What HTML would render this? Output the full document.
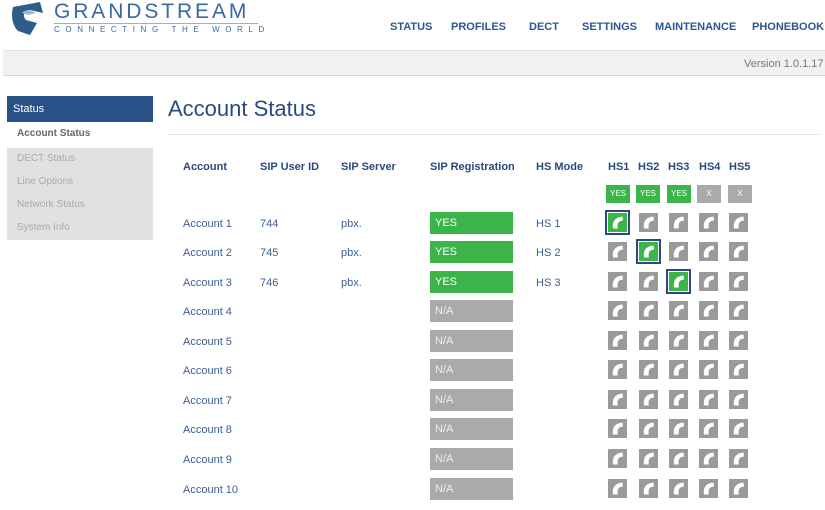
<!DOCTYPE html>
<html><head><meta charset="utf-8"><style>
*{margin:0;padding:0;box-sizing:border-box}
body{width:825px;height:510px;overflow:hidden;background:#fff;font-family:"Liberation Sans",sans-serif;position:relative;color:#2f5590}
.a{position:absolute;white-space:nowrap}
.nav{font-size:11px;font-weight:bold;color:#2f5590;top:20px}
.th{font-size:11px;font-weight:bold;color:#2a4a7d;top:161px}
.td{font-size:11px;color:#3a5e94}
.reg{position:absolute;left:430px;width:83px;height:22px;color:#fff;font-size:11px;line-height:22px;padding-left:5px}
.y{background:#3bb44a}.n{background:#aaaaaa;color:#eee}
.bd{position:absolute;top:185px;width:24px;height:18px;font-size:8px;color:#fff;text-align:center;line-height:18px}
.ph{position:absolute;width:19px;height:19px;background:#9a9a9a}
.ph svg{display:block}
.sel{position:absolute;width:25px;height:25px;border:2px solid #2a4a7d;background:#fff}
.sel .ph{left:1px;top:1px;background:#3bb44a}
</style></head><body>
<svg width="0" height="0" style="position:absolute"><defs><symbol id="h" viewBox="0 0 19 19"><path d="M5 15.5 C4 10 6 5.5 11.5 4 L14.5 3.5 L15 7.5 L12.5 8 C10.5 8.8 9.5 10.5 9.6 13.5 L9.8 15.5 Z" fill="#fff"/></symbol></defs></svg>
<svg class="a" style="left:10px;top:1px" width="36" height="36" viewBox="0 0 36 36"><path d="M3 6 L30 1 L33 12 L20 9 C14 9 12 14 16 19 L27 22 L20 34 L8 30 C2 24 1 14 3 6Z" fill="#2e5d8a"/><path d="M12 12 C15 8 22 9 26 12 L18 14 Z" fill="#9ab8d0"/></svg>
<div class="a" style="left:54px;top:0px;font-size:21px;letter-spacing:2.9px;color:#3a69a0">GRANDSTREAM</div>
<div class="a" style="left:54px;top:23px;width:204px;height:1px;background:#9ab0c8"></div>
<div class="a" style="left:54px;top:25px;font-size:8px;letter-spacing:5.6px;color:#3a69a0">CONNECTING THE WORLD</div>
<div class="a nav" style="left:390px;top:21px">STATUS</div>
<div class="a nav" style="left:451px;top:21px">PROFILES</div>
<div class="a nav" style="left:529px;top:21px">DECT</div>
<div class="a nav" style="left:582px;top:21px">SETTINGS</div>
<div class="a nav" style="left:655px;top:21px">MAINTENANCE</div>
<div class="a nav" style="left:752px;top:21px">PHONEBOOK</div>
<div class="a" style="left:3px;top:50px;width:822px;height:26px;background:#f1f1f1;border-top:1px solid #e2e2e2;border-bottom:1px solid #d6d6d6"></div>
<div class="a" style="left:744px;top:58px;font-size:11px;color:#777">Version 1.0.1.17</div>
<div class="a" style="left:7px;top:96px;width:146px;height:26px;background:#2a5088;color:#fff;font-size:11px;line-height:26px;padding-left:6px">Status</div>
<div class="a" style="left:17px;top:128px;font-size:10px;font-weight:bold;color:#666">Account Status</div>
<div class="a" style="left:7px;top:148px;width:146px;height:92px;background:#e1e1e1"></div>
<div class="a" style="left:17px;top:153px;font-size:10px;color:#aaa">DECT Status</div>
<div class="a" style="left:17px;top:176px;font-size:10px;color:#aaa">Line Options</div>
<div class="a" style="left:17px;top:199px;font-size:10px;color:#aaa">Network Status</div>
<div class="a" style="left:17px;top:222px;font-size:10px;color:#aaa">System Info</div>
<div class="a" style="left:168px;top:96px;font-size:22px;color:#2a4a7d">Account Status</div>
<div class="a" style="left:168px;top:134px;width:652px;height:1px;background:#e4e4e4"></div>
<div class="a th" style="left:183px">Account</div>
<div class="a th" style="left:260px">SIP User ID</div>
<div class="a th" style="left:341px">SIP Server</div>
<div class="a th" style="left:430px">SIP Registration</div>
<div class="a th" style="left:536px">HS Mode</div>
<div class="a th" style="left:608px">HS1</div>
<div class="a th" style="left:638px">HS2</div>
<div class="a th" style="left:668px">HS3</div>
<div class="a th" style="left:699px">HS4</div>
<div class="a th" style="left:729px">HS5</div>
<div class="bd y" style="left:606px">YES</div><div class="bd y" style="left:636px">YES</div><div class="bd y" style="left:667px">YES</div><div class="bd n" style="left:697px">X</div><div class="bd n" style="left:728px">X</div>

<div class="a td" style="left:183px;top:218px">Account 1</div><div class="a td" style="left:260px;top:218px">744</div><div class="a td" style="left:341px;top:218px">pbx.</div><div class="reg y" style="top:212px">YES</div><div class="a td" style="left:536px;top:218px">HS 1</div>
<div class="a td" style="left:183px;top:247px">Account 2</div><div class="a td" style="left:260px;top:247px">745</div><div class="a td" style="left:341px;top:247px">pbx.</div><div class="reg y" style="top:241px">YES</div><div class="a td" style="left:536px;top:247px">HS 2</div>
<div class="a td" style="left:183px;top:277px">Account 3</div><div class="a td" style="left:260px;top:277px">746</div><div class="a td" style="left:341px;top:277px">pbx.</div><div class="reg y" style="top:271px">YES</div><div class="a td" style="left:536px;top:277px">HS 3</div>
<div class="a td" style="left:183px;top:306px">Account 4</div><div class="reg n" style="top:300px">N/A</div>
<div class="a td" style="left:183px;top:336px">Account 5</div><div class="reg n" style="top:330px">N/A</div>
<div class="a td" style="left:183px;top:365px">Account 6</div><div class="reg n" style="top:359px">N/A</div>
<div class="a td" style="left:183px;top:395px">Account 7</div><div class="reg n" style="top:389px">N/A</div>
<div class="a td" style="left:183px;top:424px">Account 8</div><div class="reg n" style="top:418px">N/A</div>
<div class="a td" style="left:183px;top:454px">Account 9</div><div class="reg n" style="top:448px">N/A</div>
<div class="a td" style="left:183px;top:484px">Account 10</div><div class="reg n" style="top:478px">N/A</div>

<div id="grid"></div>
<script>
var ys=[223,252,282,311,341,370,400,429,459,489],xs=[609,640,670,700,730],h='';
ys.forEach(function(y,r){xs.forEach(function(x,c){
var ic='<svg width="19" height="19"><use href="#h"/></svg>';
if(r<3&&r==c){h+='<div class="sel" style="left:'+(x-4)+'px;top:'+(y-13)+'px"><div class="ph">'+ic+'</div></div>';}
else h+='<div class="ph" style="left:'+(x-1)+'px;top:'+(y-10)+'px">'+ic+'</div>';});});
document.getElementById('grid').innerHTML=h;
</script>
</body></html>
